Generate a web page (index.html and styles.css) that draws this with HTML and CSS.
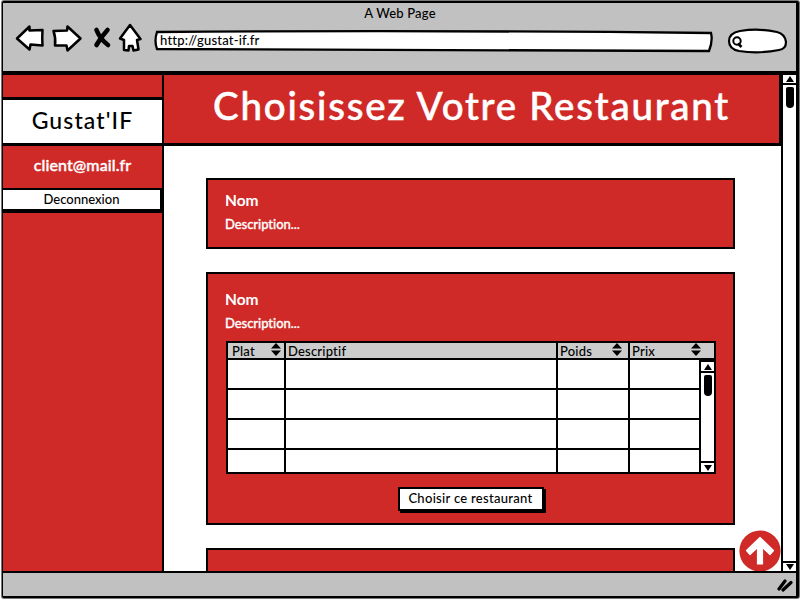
FILE: index.html
```html
<!DOCTYPE html>
<html lang="fr">
<head>
<meta charset="utf-8">
<title>A Web Page</title>
<link rel="stylesheet" href="styles.css">
</head>
<body>
<div class="window">
  <header class="chrome">
    <div class="window-title">A Web Page</div>
    <div class="toolbar">
      <svg class="nav" width="130" height="36" viewBox="0 0 130 36">
        <g fill="#fff" stroke="#000" stroke-width="2.500" stroke-linejoin="round">
          <path d="M3 15.500 L15.500 3.500 L15.500 7.500 L28.500 7 Q28 15 28.500 22.500 L16.500 21.500 L15.500 26.500 Z"/>
          <path d="M39.500 8 L53 7.500 L53.500 3.500 L66.500 15.500 L53.500 27.500 L52.500 22.500 L41 22.500 Q42 15 39.500 8 Z"/>
          <path d="M116 2 L126.500 16 L123 17 L124.500 26.500 L119.500 27.500 L118.500 23 L115 23 L114.500 27.500 L110 27 L110 17 L106 15.500 Z"/>
        </g>
        <path d="M82.500 7 Q86 16 94 22 M93.500 7 Q87 14 82.500 22" fill="none" stroke="#000" stroke-width="4.600" stroke-linecap="round"/>
      </svg>
      <div class="address">
        <svg class="sketch" width="560" height="24" viewBox="0 0 560 24"><path d="M3 3 Q280 1 557 4 Q559 12 555 22 Q280 22 3 20 Q0 12 3 3 Z" fill="#fff" stroke="#000" stroke-width="2.3"/></svg>
        <span>http://gustat-if.fr</span>
      </div>
      <svg class="search" width="62" height="26" viewBox="0 0 62 26">
        <path d="M13 3 Q32 0 50 4 Q58 6 59 14 Q59 21 52 22 Q32 26 12 23 Q2 21 2 13 Q2 5 13 3 Z" fill="#fff" stroke="#000" stroke-width="2.2"/>
        <circle cx="10" cy="13" r="3.700" fill="none" stroke="#000" stroke-width="2"/><path d="M11 15.500 L14.500 19" stroke="#000" stroke-width="2.600"/>
      </svg>
    </div>
  </header>

  <div class="page">
    <aside class="sidebar">
      <div class="brand">Gustat'IF</div>
      <div class="mail">client@mail.fr</div>
      <div class="logout">Deconnexion</div>
    </aside>
    <main class="main">
      <h1 class="banner"><span>Choisissez Votre Restaurant</span></h1>
      <div class="cards">
        <section class="card card-small">
          <h2>Nom</h2>
          <p>Description...</p>
        </section>
        <section class="card card-large">
          <h2>Nom</h2>
          <p>Description...</p>
          <div class="table">
            <div class="row head">
              <div class="cell">Plat<svg class="sort" width="10" height="13" viewBox="0 0 10 13"><path d="M5 0 L10 5.500 H0 Z M0 7.500 H10 L5 13 Z"/></svg></div>
              <div class="cell">Descriptif</div>
              <div class="cell poids">Poids<svg class="sort" width="10" height="13" viewBox="0 0 10 13"><path d="M5 0 L10 5.500 H0 Z M0 7.500 H10 L5 13 Z"/></svg></div>
              <div class="cell">Prix<svg class="sort" width="10" height="13" viewBox="0 0 10 13"><path d="M5 0 L10 5.500 H0 Z M0 7.500 H10 L5 13 Z"/></svg></div>
            </div>
            <div class="table-body">
              <div class="rows">
                <div class="row"><div class="cell"></div><div class="cell"></div><div class="cell"></div><div class="cell"></div></div>
                <div class="row"><div class="cell"></div><div class="cell"></div><div class="cell"></div><div class="cell"></div></div>
                <div class="row"><div class="cell"></div><div class="cell"></div><div class="cell"></div><div class="cell"></div></div>
                <div class="row"><div class="cell"></div><div class="cell"></div><div class="cell"></div><div class="cell"></div></div>
              </div>
              <div class="scroll inner">
                <div class="arrow"><svg width="8" height="6" viewBox="0 0 8 6"><path d="M4 0 L8 6 H0 Z"/></svg></div>
                <div class="thumb"></div>
                <div class="arrow down"><svg width="8" height="6" viewBox="0 0 8 6"><path d="M0 0 H8 L4 6 Z"/></svg></div>
              </div>
            </div>
          </div>
          <div class="choose">Choisir ce restaurant</div>
        </section>
        <section class="card card-next"></section>
      </div>
      <svg class="to-top" width="42" height="42" viewBox="0 0 42 42">
        <circle cx="21" cy="21" r="20.600" fill="#cf2a27"/>
        <path d="M18.500 34 V17.500 L11 24.500 L7.500 20.500 L21 7.500 L34.500 20.500 L31 24.500 L23.500 17.500 V34 Z" fill="#fff" stroke="#fff" stroke-width="1.200" stroke-linejoin="round"/>
      </svg>
    </main>
    <div class="scroll outer">
      <div class="arrow"><svg width="8" height="6" viewBox="0 0 8 6"><path d="M4 0 L8 6 H0 Z"/></svg></div>
      <div class="thumb"></div>
      <div class="arrow down"><svg width="8" height="6" viewBox="0 0 8 6"><path d="M0 0 H8 L4 6 Z"/></svg></div>
    </div>
  </div>

  <footer class="status">
    <svg width="18" height="15" viewBox="0 0 18 15"><path d="M3 12 L9 4 M7 13 L15 5.500" stroke="#000" stroke-width="3.200" stroke-linecap="round"/></svg>
  </footer>
</div>
</body>
</html>
```

FILE: styles.css
```css
* { box-sizing: border-box; }
body {
  margin: 0;
  width: 800px;
  height: 600px;
  overflow: hidden;
  background: #fff;
  font-family: Lato, sans-serif;
  font-size: 13px;
  font-weight: 500;
  color: #000;
}
.window {
  display: flex;
  flex-direction: column;
  width: 797px;
  height: 597px;
  margin: 1px 0 0 2px;
  border: 2px solid #000;
  border-left-width: 1px;
  border-right-width: 3px;
  border-radius: 2px;
  background: #c1c1c1;
  box-shadow: 0 0 0 1px #777;
}
.chrome { height: 68px; flex: none; }
.window-title {
  height: 22px;
  padding-left: 1px;
  line-height: 21px;
  text-align: center;
  letter-spacing: .2px;
}
.toolbar { display: flex; align-items: flex-start; }
.nav { margin-left: 11px; margin-top: -2px; }
.address { position: relative; width: 560px; height: 24px; margin: 4px 0 0 10px; }
.sketch { position: absolute; left: 0; top: 0; }
.address span { position: relative; display: block; padding-left: 6px; line-height: 23px; letter-spacing: .2px; }
.search { margin: 3px 0 0 13px; }

.page {
  display: flex;
  height: 502px;
  flex: none;
  border-bottom: 2px solid #000;
  background: #fff;
}
.sidebar {
  width: 161px;
  flex: none;
  border-top: 4px solid #000;
  border-right: 2px solid #000;
  background: #cf2a27;
  text-align: center;
}
.brand {
  height: 49px;
  margin-top: 22px;
  border-top: 3px solid #000;
  border-bottom: 3px solid #000;
  background: #fff;
  font-size: 23px;
  line-height: 41px;
  letter-spacing: 1.1px;
}
.mail { height: 42px; line-height: 37px; color: #fff; font-size: 16px; letter-spacing: .1px; -webkit-text-stroke: .4px #fff; }
.logout {
  height: 25px;
  border-top: 2px solid #000;
  border-bottom: 4px solid #000;
  border-right: 2px solid #000;
  background: #fff;
  line-height: 19px;
}
.main { position: relative; flex: 1; overflow: hidden; }
.banner {
  height: 75px;
  width: 617px;
  margin: 0;
  border: solid #000;
  border-width: 4px 2px 3px 0;
  background: #cf2a27;
  color: #fff;
  text-align: center;
  font-size: 38.5px;
  font-weight: 500;
  line-height: 61px;
  letter-spacing: 1.75px;
  -webkit-text-stroke: .5px #fff;
}
.cards { display: flex; flex-direction: column; gap: 23px; padding: 32px 0 0 42px; }
.card {
  width: 529px;
  flex: none;
  padding: 0 17px;
  border: 2px solid #000;
  background: #cf2a27;
  color: #fff;
}
.card h2 { margin: 0; font-size: 15.5px; line-height: 20px; font-weight: 700; }
.card p { margin: 6px 0 0; line-height: 16px; font-weight: 500; -webkit-text-stroke: .3px #fff; letter-spacing: -.05px; }
.card-small { height: 71px; padding-top: 10px; }
.card-large { height: 253px; padding-top: 15px; }
.card-next { height: 40px; }
.table {
  width: 490px;
  height: 133px;
  margin: 10px 0 0 1px;
  border: 2px solid #000;
  background: #fff;
  color: #000;
}
.row { display: grid; grid-template-columns: 58px 272px 72px 1fr; height: 30px; border-bottom: 2px solid #000; }
.cell { border-right: 2px solid #000; }
.cell:last-child { border-right: 0; }
.head { height: 17px; background: #ccc; }
.head .cell { display: flex; justify-content: space-between; padding: 0 3px 0 2px; line-height: 16px; letter-spacing: .2px; }
.head .cell:first-child { padding-left: 4px; }
.head .poids { padding-right: 6px; }
.head .cell:last-child { padding-right: 13px; }
.table-body { display: flex; height: 112px; }
.rows { flex: 1; overflow: hidden; }
.scroll { display: flex; flex-direction: column; flex: none; background: #fff; }
.arrow { display: flex; align-items: center; justify-content: center; border-bottom: 2px solid #000; }
.arrow.down { margin-top: auto; border-bottom: 0; border-top: 2px solid #000; }
.thumb { width: 8px; height: 21px; margin: 2px auto 0; border-radius: 2px 2px 4px 4px; background: #000; }
.inner { width: 15px; border-left: 2px solid #000; border-top: 2px solid #000; }
.inner .arrow { height: 11px; }
.outer { width: 15px; border-top: 4px solid #000; border-left: 2px solid #000; }
.outer .arrow { height: 10px; }
.choose {
  width: 146px;
  height: 24px;
  margin: 13px auto 0;
  border: 2px solid #000;
  background: #fff;
  box-shadow: 2px 2px 0 #000;
  color: #000;
  line-height: 19px;
  text-align: center;
  letter-spacing: .3px;
}
.to-top { position: absolute; right: 0; bottom: -1px; }
.status { display: flex; justify-content: flex-end; align-items: center; flex: 1; padding-right: 2px; }
```
